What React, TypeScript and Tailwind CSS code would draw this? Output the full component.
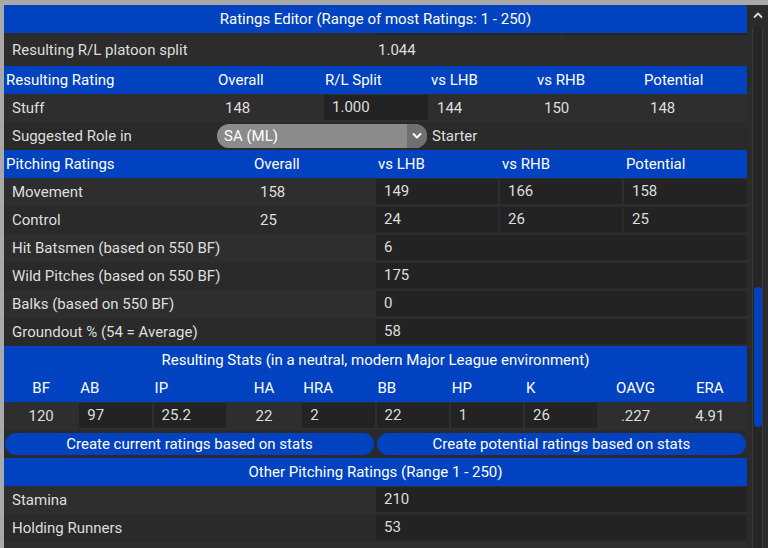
import React from "react";

const BLUE = "bg-[#0042c0]";

function HeaderBar({ children }: { children: React.ReactNode }) {
  return (
    <div className={`h-[28px] ${BLUE} flex items-center justify-center text-white`}>
      {children}
    </div>
  );
}

function InputBox({ value, className = "" }: { value: string; className?: string }) {
  return (
    <div className={`h-[25px] bg-[#232323] flex items-center pl-[8px] ${className}`}>{value}</div>
  );
}

function WideRow({ label, value, shade }: { label: string; value: string; shade: string }) {
  return (
    <div className={`h-[28px] flex ${shade}`}>
      <div className="w-[372px] pl-[8px] flex items-center">{label}</div>
      <div className="flex-1 pt-[1px]">
        <InputBox value={value} />
      </div>
    </div>
  );
}

const A = "bg-[#2e2e2e]";
const B = "bg-[#2a2a2a]";

export default function App() {
  const statHeads = ["BF", "AB", "IP", "HA", "HRA", "BB", "HP", "K", "OAVG", "ERA"];
  const statVals: { v: string; input: boolean }[] = [
    { v: "120", input: false },
    { v: "97", input: true },
    { v: "25.2", input: true },
    { v: "22", input: false },
    { v: "2", input: true },
    { v: "22", input: true },
    { v: "1", input: true },
    { v: "26", input: true },
    { v: ".227", input: false },
    { v: "4.91", input: false },
  ];

  return (
    <div className="w-[768px] h-[548px] overflow-hidden bg-[#a9a9a9] pl-[4px] pt-[5px] font-['Roboto',sans-serif] text-[15px] text-[#dedede]">
      <div className="flex h-full bg-[#292929]">
        <div className="w-[743px] flex flex-col">
          <HeaderBar>Ratings Editor (Range of most Ratings: 1 - 250)</HeaderBar>

          <div className="h-[33px] flex flex-col bg-[#2c2c2c]">
            <div className="h-[2px] flex">
              <div className="w-[372px]" />
              <div className="w-[184px] bg-[#242424]" />
              <div className="w-[2px]" />
              <div className="flex-1 bg-[#242424]" />
            </div>
            <div className="flex-1 flex items-center">
              <div className="w-[374px] pl-[8px]">Resulting R/L platoon split</div>
              <div>1.044</div>
            </div>
          </div>

          <div className={`h-[28px] ${BLUE} flex items-center text-white`}>
            <div className="w-[213px] pl-[2px]">Resulting Rating</div>
            <div className="w-[106px] pl-[1px]">Overall</div>
            <div className="w-[106px] pl-[2px]">R/L Split</div>
            <div className="w-[106px] pl-[2px]">vs LHB</div>
            <div className="w-[106px] pl-[2px]">vs RHB</div>
            <div className="w-[106px] pl-[3px]">Potential</div>
          </div>

          <div className={`h-[28px] flex ${A}`}>
            <div className="w-[213px] pl-[8px] flex items-center">Stuff</div>
            <div className="w-[106px] pl-[8px] flex items-center">148</div>
            <div className="w-[106px] pl-[1px] pt-[1px]">
              <InputBox value="1.000" className="w-[104px] pl-[7px]" />
            </div>
            <div className="w-[106px] pl-[8px] flex items-center">144</div>
            <div className="w-[106px] pl-[9px] flex items-center">150</div>
            <div className="w-[106px] pl-[9px] flex items-center">148</div>
          </div>

          <div className={`h-[28px] flex items-center ${B}`}>
            <div className="w-[213px] pl-[8px]">Suggested Role in</div>
            <div className="w-[210px] h-[24px] rounded-full bg-[#8b8b8b] flex overflow-hidden text-white">
              <div className="flex-1 pl-[7px] flex items-center">SA (ML)</div>
              <div className="w-[20px] bg-[#707070] flex items-center justify-center">
                <svg width="10" height="8" viewBox="0 0 10 8" fill="none">
                  <path d="M1.5 2 L5 5.5 L8.5 2" stroke="#ffffff" strokeWidth="2" strokeLinecap="round" strokeLinejoin="round" />
                </svg>
              </div>
            </div>
            <div className="pl-[5px]">Starter</div>
          </div>

          <div className={`h-[28px] ${BLUE} flex items-center text-white`}>
            <div className="w-[248px] pl-[2px]">Pitching Ratings</div>
            <div className="w-[123px] pl-[2px]">Overall</div>
            <div className="w-[124px] pl-[3px]">vs LHB</div>
            <div className="w-[124px] pl-[3px]">vs RHB</div>
            <div className="w-[124px] pl-[3px]">Potential</div>
          </div>

          {[
            ["Movement", "158", "149", "166", "158", A],
            ["Control", "25", "24", "26", "25", B],
          ].map(([label, ov, l, r, p, shade]) => (
            <div key={label} className={`h-[28px] flex ${shade}`}>
              <div className="w-[248px] pl-[8px] flex items-center">{label}</div>
              <div className="w-[124px] pl-[8px] flex items-center">{ov}</div>
              <div className="w-[124px] pt-[1px] pr-[2px]">
                <InputBox value={l} />
              </div>
              <div className="w-[124px] pt-[1px] pr-[2px]">
                <InputBox value={r} />
              </div>
              <div className="w-[123px] pt-[1px]">
                <InputBox value={p} />
              </div>
            </div>
          ))}

          <WideRow label="Hit Batsmen (based on 550 BF)" value="6" shade={A} />
          <WideRow label="Wild Pitches (based on 550 BF)" value="175" shade={B} />
          <WideRow label="Balks (based on 550 BF)" value="0" shade={A} />
          <WideRow label="Groundout % (54 = Average)" value="58" shade={B} />

          <HeaderBar>Resulting Stats (in a neutral, modern Major League environment)</HeaderBar>
          <div className={`h-[28px] ${BLUE} grid grid-cols-10 items-center text-white`}>
            {statHeads.map((h, i) => (
              <div key={h} className={statVals[i].input ? "pl-[2px]" : "text-center"}>
                {h}
              </div>
            ))}
          </div>
          <div className={`h-[28px] grid grid-cols-10 ${A}`}>
            {statVals.map((s, i) =>
              s.input ? (
                <div key={i} className="pt-[1px] px-[1px]">
                  <InputBox value={s.v} />
                </div>
              ) : (
                <div key={i} className="flex items-center justify-center">
                  {s.v}
                </div>
              )
            )}
          </div>

          <div className={`h-[28px] flex items-center gap-[3px] pl-[1px] pr-[1px] ${B}`}>
            <button className={`flex-1 h-[22px] rounded-full ${BLUE} text-white`}>
              Create current ratings based on stats
            </button>
            <button className={`flex-1 h-[22px] rounded-full ${BLUE} text-white`}>
              Create potential ratings based on stats
            </button>
          </div>

          <HeaderBar>Other Pitching Ratings (Range 1 - 250)</HeaderBar>
          <WideRow label="Stamina" value="210" shade={A} />
          <WideRow label="Holding Runners" value="53" shade={B} />
          <div className={`flex-1 ${A}`} />
        </div>

        <div className="w-[21px] flex flex-col items-center bg-[#2b2b2b]">
          <div className="h-[20px] flex items-center justify-center">
            <svg width="10" height="8" viewBox="0 0 10 8" fill="none">
              <path d="M1.5 6 L5 2.5 L8.5 6" stroke="#d8d8d8" strokeWidth="1.8" strokeLinecap="round" strokeLinejoin="round" />
            </svg>
          </div>
          <div className="flex-1 w-[11px] border-x border-[#3a3a3a] bg-[#262626] rounded-t-full flex flex-col items-center">
            <div className="mt-[262px] w-[8px] h-[140px] rounded-full bg-[#0042c0]" />
          </div>
        </div>
      </div>
    </div>
  );
}
